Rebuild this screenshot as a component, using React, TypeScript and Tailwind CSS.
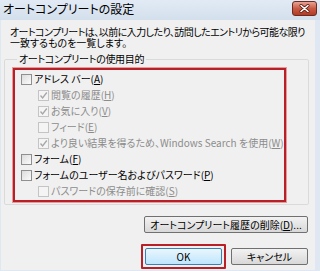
import React from "react";

const font = "font-['Meiryo_UI','Noto_Sans_CJK_JP','Noto_Sans',sans-serif] [font-feature-settings:'palt']";

function Box({ checked, disabled }: { checked?: boolean; disabled?: boolean }) {
  return (
    <span
      className={`flex items-center justify-center w-[11px] h-[11px] shrink-0 border ${
        disabled ? "border-[#c4c4c4] bg-[#f4f4f4]" : "border-[#8f8f8f] bg-gradient-to-br from-[#dcdcdc] to-[#fbfbfb]"
      }`}
    >
      {checked && (
        <svg width="9" height="9" viewBox="0 0 9 9">
          <path d="M1.5 4.5 L3.6 7 L7.8 1.5" fill="none" stroke={disabled ? "#a6a6a6" : "#333"} strokeWidth="1.3" />
        </svg>
      )}
    </span>
  );
}

function Row({
  label,
  acc,
  indent,
  checked,
  disabled,
}: {
  label: string;
  acc: string;
  indent?: boolean;
  checked?: boolean;
  disabled?: boolean;
}) {
  return (
    <div className={`flex items-center h-[16px] gap-[2px] ${indent ? "pl-[23px]" : "pl-[6px]"}`}>
      <Box checked={checked} disabled={disabled} />
      <span className={`text-[10px] leading-[16px] whitespace-nowrap ${disabled ? "text-[#8c8c8c]" : "text-black"}`}>
        {label}(<span className="underline">{acc}</span>)
      </span>
    </div>
  );
}

export default function App() {
  return (
    <div className={`w-[320px] h-[271px] overflow-hidden flex flex-col bg-[#dfe8f2] ${font}`}>
      <div className="h-[20px] flex items-start justify-between bg-gradient-to-b from-[#e2ebf5] to-[#d3dfec] shrink-0">
        <span className="pl-[3px] pt-[2px] text-[12px] leading-[14px] text-black">オートコンプリートの設定</span>
        <div className="mt-[1px] mr-[3px] w-[25px] h-[15px] rounded-[3px] border border-[#6b2a22] bg-gradient-to-b from-[#e8a294] via-[#c85a44] to-[#b43a22] flex items-center justify-center">
          <svg width="11" height="9" viewBox="0 0 11 9">
            <path d="M2 1.5 L9 7.5 M9 1.5 L2 7.5" stroke="#5a1d14" strokeWidth="3" strokeLinecap="round" />
            <path d="M2 1.5 L9 7.5 M9 1.5 L2 7.5" stroke="#ffffff" strokeWidth="1.6" strokeLinecap="round" />
          </svg>
        </div>
      </div>
      <div className="flex-1 flex flex-col bg-[#f0f0f0] ml-[1px] mr-[5px] mb-[1px] pl-[9px] pr-[7px]">
        <div className="pt-[6px] text-[10px] leading-[11px] text-black whitespace-nowrap">
          <div className="tracking-[-0.55px]">オートコンプリートは、以前に入力したり、訪問したエントリから可能な限り</div>
          <div>一致するものを一覧します。</div>
        </div>
        <fieldset className="mt-[6px] -ml-[6px] -mr-[1px] border border-[#dadada] rounded-[2px] pl-[8px] pr-[3px] pb-[2px] min-w-0">
          <legend className="ml-[4px] px-[2px] text-[10px] leading-[10px] tracking-[-0.3px] text-black">オートコンプリートの使用目的</legend>
          <div className="mt-[4px] w-[273px] border-2 border-[#b81f27] shadow-[0_0_0_1px_#e79a9a] pt-[1px] pb-[1px]">
            <Row label="アドレス バー" acc="A" />
            <Row label="閲覧の履歴" acc="H" indent checked disabled />
            <Row label="お気に入り" acc="V" indent checked disabled />
            <Row label="フィード" acc="E" indent disabled />
            <Row label="より良い結果を得るため、Windows Search を使用" acc="W" indent checked disabled />
            <Row label="フォーム" acc="F" />
            <Row label="フォームのユーザー名およびパスワード" acc="P" />
            <Row label="パスワードの保存前に確認" acc="S" indent disabled />
          </div>
        </fieldset>
        <div className="flex justify-end mt-[11px]">
          <button className="w-[164px] h-[17px] rounded-[2px] border border-[#707070] bg-gradient-to-b from-[#f2f2f2] to-[#d8d8d8] text-[10px] leading-[15px] text-black">
            オートコンプリート履歴の削除(<span className="underline">D</span>)...
          </button>
        </div>
        <div className="flex justify-end items-center gap-[5px] mt-[11px]">
          <div className="p-[2px] border-[2px] border-[#b81f27] rounded-[1px]">
            <button className="block w-[77px] h-[17px] rounded-[2px] border border-[#3c7fb1] bg-gradient-to-b from-[#eaf6fd] to-[#bee6fd] text-[10px] leading-[15px] text-black">
              OK
            </button>
          </div>
          <button className="w-[77px] h-[17px] rounded-[2px] border border-[#707070] bg-gradient-to-b from-[#f2f2f2] to-[#d8d8d8] text-[10px] leading-[15px] text-black">
            キャンセル
          </button>
        </div>
      </div>
    </div>
  );
}
